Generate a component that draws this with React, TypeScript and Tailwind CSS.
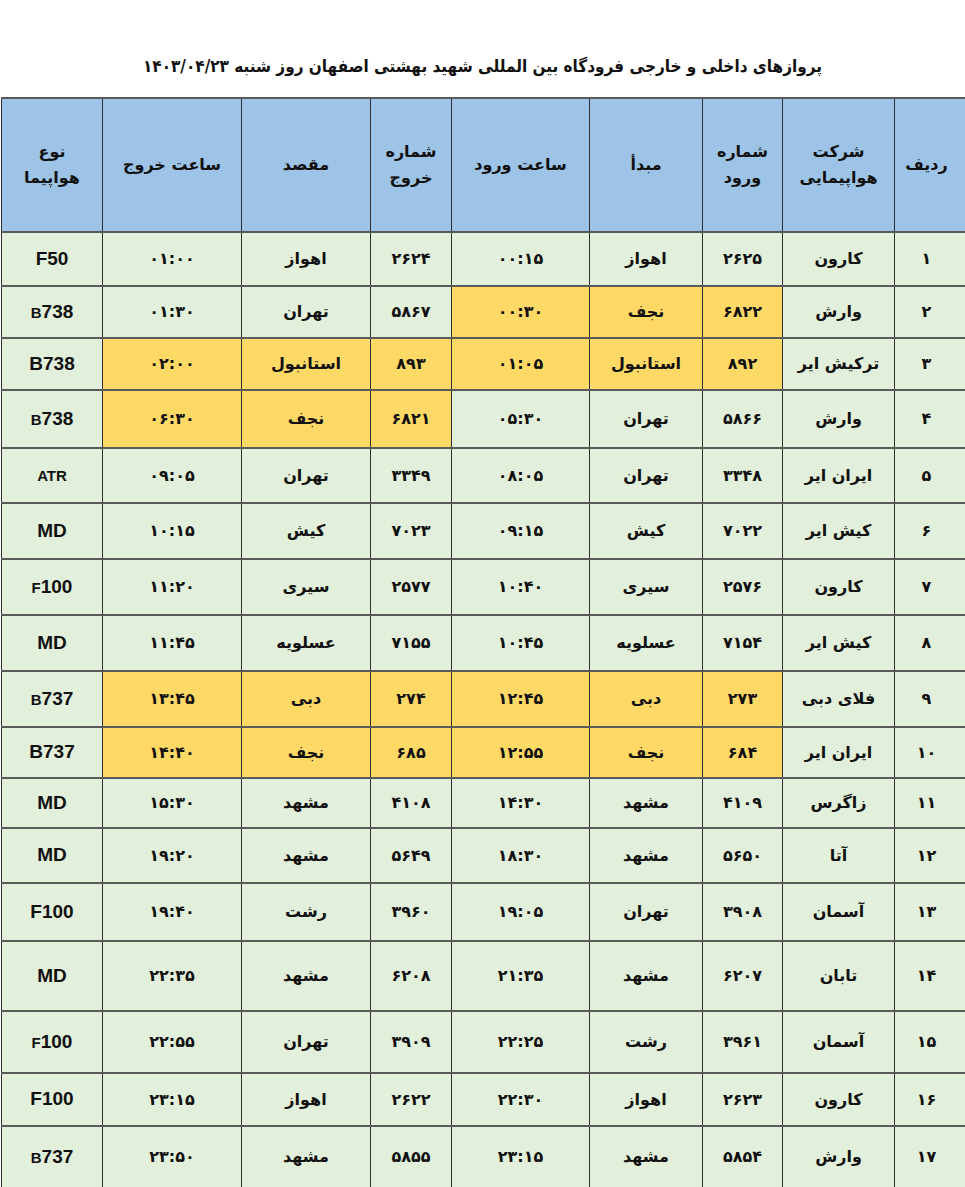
import React from "react";

type Flight = {
  no: string;
  airline: string;
  arrNo: string;
  origin: string;
  arrTime: string;
  depNo: string;
  dest: string;
  depTime: string;
  type: string;
  smallFirst?: boolean;
  small?: boolean;
  arrHi?: boolean;
  depHi?: boolean;
  h: string;
};

const flights: Flight[] = [
  { no: "۱", airline: "کارون", arrNo: "۲۶۲۵", origin: "اهواز", arrTime: "۰۰:۱۵", depNo: "۲۶۲۴", dest: "اهواز", depTime: "۰۱:۰۰", type: "F50", h: "h-[54px]" },
  { no: "۲", airline: "وارش", arrNo: "۶۸۲۲", origin: "نجف", arrTime: "۰۰:۳۰", depNo: "۵۸۶۷", dest: "تهران", depTime: "۰۱:۳۰", type: "B738", smallFirst: true, arrHi: true, h: "h-[52px]" },
  { no: "۳", airline: "ترکیش ایر", arrNo: "۸۹۲", origin: "استانبول", arrTime: "۰۱:۰۵", depNo: "۸۹۳", dest: "استانبول", depTime: "۰۲:۰۰", type: "B738", arrHi: true, depHi: true, h: "h-[52px]" },
  { no: "۴", airline: "وارش", arrNo: "۵۸۶۶", origin: "تهران", arrTime: "۰۵:۳۰", depNo: "۶۸۲۱", dest: "نجف", depTime: "۰۶:۳۰", type: "B738", smallFirst: true, depHi: true, h: "h-[58px]" },
  { no: "۵", airline: "ایران ایر", arrNo: "۳۳۴۸", origin: "تهران", arrTime: "۰۸:۰۵", depNo: "۳۳۴۹", dest: "تهران", depTime: "۰۹:۰۵", type: "ATR", small: true, h: "h-[55px]" },
  { no: "۶", airline: "کیش ایر", arrNo: "۷۰۲۲", origin: "کیش", arrTime: "۰۹:۱۵", depNo: "۷۰۲۳", dest: "کیش", depTime: "۱۰:۱۵", type: "MD", h: "h-[56px]" },
  { no: "۷", airline: "کارون", arrNo: "۲۵۷۶", origin: "سیری", arrTime: "۱۰:۴۰", depNo: "۲۵۷۷", dest: "سیری", depTime: "۱۱:۲۰", type: "F100", smallFirst: true, h: "h-[56px]" },
  { no: "۸", airline: "کیش ایر", arrNo: "۷۱۵۴", origin: "عسلویه", arrTime: "۱۰:۴۵", depNo: "۷۱۵۵", dest: "عسلویه", depTime: "۱۱:۴۵", type: "MD", h: "h-[56px]" },
  { no: "۹", airline: "فلای دبی", arrNo: "۲۷۳", origin: "دبی", arrTime: "۱۲:۴۵", depNo: "۲۷۴", dest: "دبی", depTime: "۱۳:۴۵", type: "B737", smallFirst: true, arrHi: true, depHi: true, h: "h-[56px]" },
  { no: "۱۰", airline: "ایران ایر", arrNo: "۶۸۴", origin: "نجف", arrTime: "۱۲:۵۵", depNo: "۶۸۵", dest: "نجف", depTime: "۱۴:۴۰", type: "B737", arrHi: true, depHi: true, h: "h-[51px]" },
  { no: "۱۱", airline: "زاگرس", arrNo: "۴۱۰۹", origin: "مشهد", arrTime: "۱۴:۳۰", depNo: "۴۱۰۸", dest: "مشهد", depTime: "۱۵:۳۰", type: "MD", h: "h-[50px]" },
  { no: "۱۲", airline: "آتا", arrNo: "۵۶۵۰", origin: "مشهد", arrTime: "۱۸:۳۰", depNo: "۵۶۴۹", dest: "مشهد", depTime: "۱۹:۲۰", type: "MD", h: "h-[55px]" },
  { no: "۱۳", airline: "آسمان", arrNo: "۳۹۰۸", origin: "تهران", arrTime: "۱۹:۰۵", depNo: "۳۹۶۰", dest: "رشت", depTime: "۱۹:۴۰", type: "F100", h: "h-[58px]" },
  { no: "۱۴", airline: "تابان", arrNo: "۶۲۰۷", origin: "مشهد", arrTime: "۲۱:۳۵", depNo: "۶۲۰۸", dest: "مشهد", depTime: "۲۲:۳۵", type: "MD", h: "h-[70px]" },
  { no: "۱۵", airline: "آسمان", arrNo: "۳۹۶۱", origin: "رشت", arrTime: "۲۲:۲۵", depNo: "۳۹۰۹", dest: "تهران", depTime: "۲۲:۵۵", type: "F100", smallFirst: true, h: "h-[62px]" },
  { no: "۱۶", airline: "کارون", arrNo: "۲۶۲۳", origin: "اهواز", arrTime: "۲۲:۳۰", depNo: "۲۶۲۲", dest: "اهواز", depTime: "۲۳:۱۵", type: "F100", h: "h-[53px]" },
  { no: "۱۷", airline: "وارش", arrNo: "۵۸۵۴", origin: "مشهد", arrTime: "۲۳:۱۵", depNo: "۵۸۵۵", dest: "مشهد", depTime: "۲۳:۵۰", type: "B737", smallFirst: true, h: "h-[62px]" },
];

const cell =
  "border-x border-x-[#2e2e2e] border-y-2 border-y-[#5a5a5a] text-center align-middle p-0";
const green = "bg-[#e2efda]";
const yellow = "bg-[#ffd966]";

function AircraftType({ f }: { f: Flight }) {
  if (f.small) return <span className="text-[15px]">{f.type}</span>;
  if (f.smallFirst)
    return (
      <span>
        <span className="text-[15px]">{f.type[0]}</span>
        {f.type.slice(1)}
      </span>
    );
  return <span>{f.type}</span>;
}

function Head({ lines, extra = "" }: { lines: string[]; extra?: string }) {
  return (
    <th className={`${cell} bg-[#9dc3e6] font-bold text-[16px] leading-[26px] ${extra}`}>
      {lines.map((l) => (
        <div key={l}>{l}</div>
      ))}
    </th>
  );
}

export default function App() {
  return (
    <div
      dir="rtl"
      className="w-[965px] min-h-[1187px] overflow-hidden bg-white text-[#111] font-['DejaVu_Sans',sans-serif]"
    >
      <div className="h-[97px] pt-[51px] text-center">
        <h1 className="font-['DejaVu_Sans_Condensed','DejaVu_Sans',sans-serif] text-[17px] font-bold leading-[30px] tracking-[-0.3px]">
          پروازهای داخلی و خارجی فرودگاه بین المللی شهید بهشتی اصفهان روز شنبه ۱۴۰۳/۰۴/۲۳
        </h1>
      </div>

      <table className="w-[973px] -mr-[10px] table-fixed border-collapse text-[16px] font-bold">
        <colgroup>
          <col className="w-[80px]" />
          <col className="w-[112px]" />
          <col className="w-[80px]" />
          <col className="w-[113px]" />
          <col className="w-[138px]" />
          <col className="w-[81px]" />
          <col className="w-[129px]" />
          <col className="w-[139px]" />
          <col className="w-[101px]" />
        </colgroup>
        <thead>
          <tr className="h-[134px]">
            <Head lines={["ردیف"]} extra="pr-[16px]" />
            <Head lines={["شرکت", "هواپیمایی"]} />
            <Head lines={["شماره", "ورود"]} />
            <Head lines={["مبدأ"]} />
            <Head lines={["ساعت ورود"]} />
            <Head lines={["شماره", "خروج"]} />
            <Head lines={["مقصد"]} />
            <Head lines={["ساعت خروج"]} />
            <Head lines={["نوع", "هواپیما"]} />
          </tr>
        </thead>
        <tbody>
          {flights.map((f) => {
            const a = f.arrHi ? yellow : green;
            const d = f.depHi ? yellow : green;
            return (
              <tr key={f.no} className={f.h}>
                <td className={`${cell} ${green} pr-[16px]`}>{f.no}</td>
                <td className={`${cell} ${green}`}>{f.airline}</td>
                <td className={`${cell} ${a}`}>{f.arrNo}</td>
                <td className={`${cell} ${a}`}>{f.origin}</td>
                <td className={`${cell} ${a}`}>{f.arrTime}</td>
                <td className={`${cell} ${d}`}>{f.depNo}</td>
                <td className={`${cell} ${d}`}>{f.dest}</td>
                <td className={`${cell} ${d}`}>{f.depTime}</td>
                <td
                  dir="ltr"
                  className={`${cell} ${green} font-['Liberation_Sans',Arial,sans-serif] text-[19px]`}
                >
                  <AircraftType f={f} />
                </td>
              </tr>
            );
          })}
        </tbody>
      </table>
    </div>
  );
}
